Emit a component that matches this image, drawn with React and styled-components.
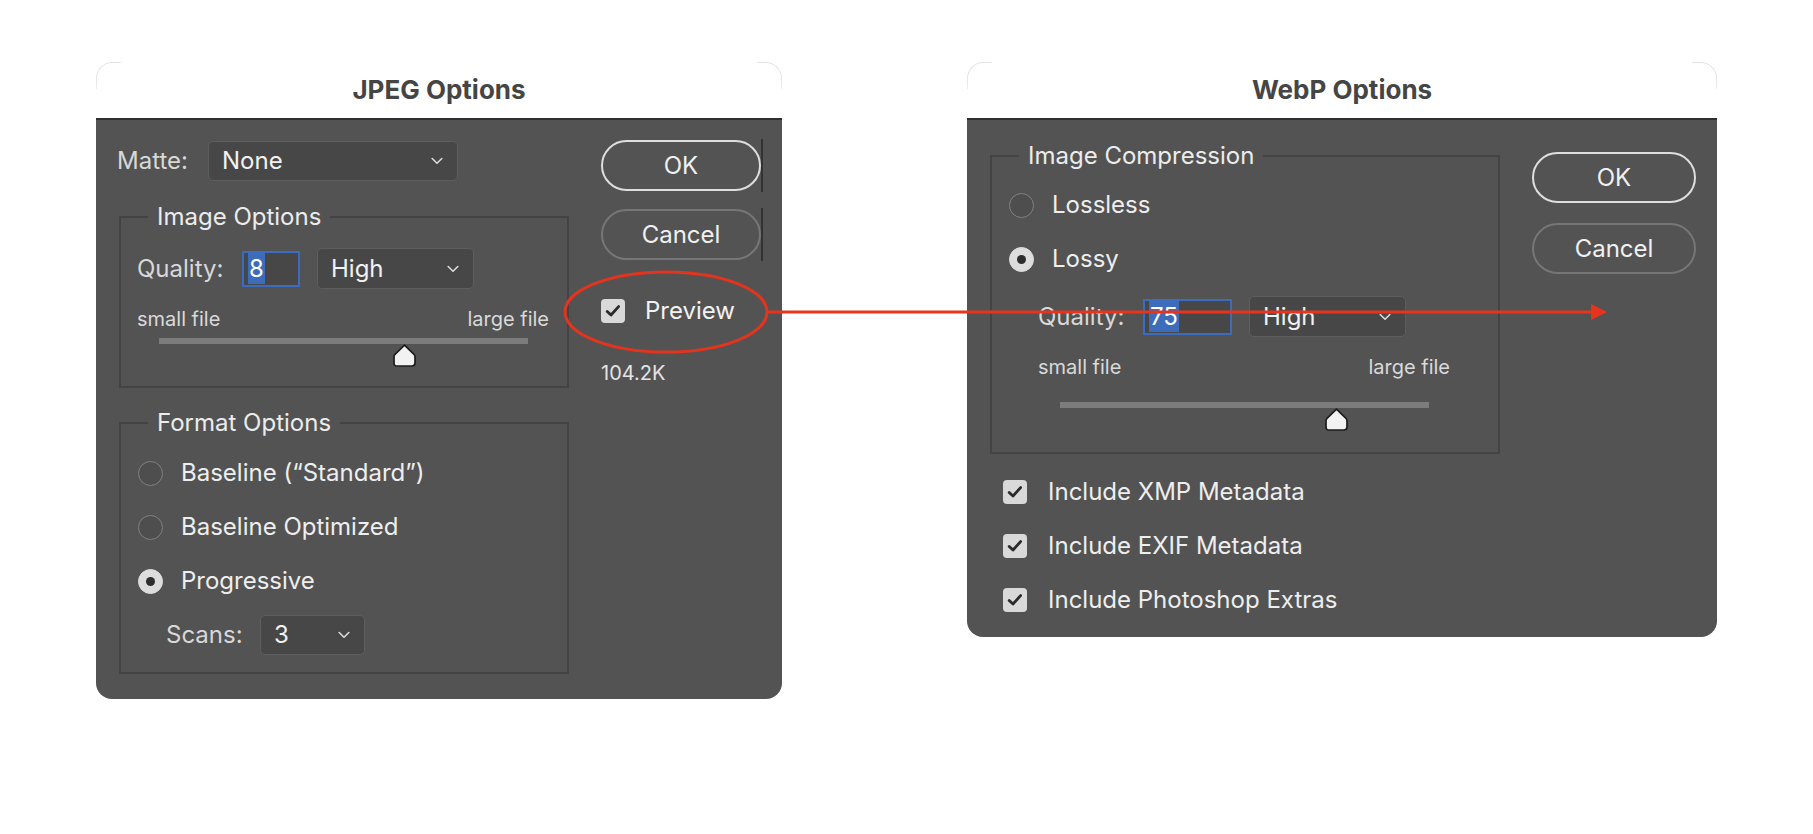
import React from 'react';
import styled, { createGlobalStyle } from 'styled-components';

const GlobalStyle = createGlobalStyle`
  html, body { margin: 0; padding: 0; background: #ffffff; }
  body {
    font-family: Inter, "Noto Sans", "Liberation Sans", sans-serif;
    -webkit-font-smoothing: antialiased;
  }
  #root { width: 1813px; height: 834px; }
`;

const Page = styled.main`
  position: relative;
  width: 1813px;
  height: 834px;
  box-sizing: border-box;
  padding: 62px 0 0 96px;
  display: flex;
  align-items: flex-start;
  gap: 185px;
  overflow: hidden;
  background: #fff;
`;

const Dialog = styled.section`
  width: ${(p) => p.$width}px;
  display: flex;
  flex-direction: column;
`;

const TitleBar = styled.header`
  position: relative;
  height: 56px;
  box-sizing: border-box;
  padding-bottom: 2px;
  display: flex;
  align-items: center;
  justify-content: center;
  font-size: 26px;
  font-weight: 700;
  color: #454545;
  background: #fff;
  &::before,
  &::after {
    content: '';
    position: absolute;
    top: 0;
    width: 24px;
    height: 26px;
    border-top: 1px solid #e0e0e0;
  }
  &::before {
    left: 0;
    border-left: 1px solid #e0e0e0;
    border-top-left-radius: 16px;
    -webkit-mask-image: radial-gradient(circle at 100% 100%, transparent 55%, #000 75%);
  }
  &::after {
    right: 0;
    border-right: 1px solid #e0e0e0;
    border-top-right-radius: 16px;
    -webkit-mask-image: radial-gradient(circle at 0% 100%, transparent 55%, #000 75%);
  }
`;

const Body = styled.div`
  background: #535353;
  border-top: 2px solid #2f2f2f;
  border-radius: 0 0 16px 16px;
  display: flex;
  align-items: flex-start;
  gap: 32px;
  padding: ${(p) => p.$pad};
  color: #eeeeee;
  font-size: 24px;
  line-height: 28px;
`;

const Column = styled.div`
  display: flex;
  flex-direction: column;
  align-items: flex-start;
  width: ${(p) => p.$w}px;
  margin-top: ${(p) => p.$top || 0}px;
`;

const FieldRow = styled.div`
  display: flex;
  align-items: center;
  height: ${(p) => p.$h || 40}px;
  margin-left: ${(p) => p.$ml || 0}px;
  margin-top: ${(p) => p.$mt || 0}px;
`;

const Label = styled.span`
  width: ${(p) => p.$w}px;
  flex: none;
  color: #d8d8d8;
  white-space: nowrap;
`;

const SelectBox = styled.div`
  width: ${(p) => p.$w}px;
  height: ${(p) => p.$h || 40}px;
  box-sizing: border-box;
  flex: none;
  display: flex;
  align-items: center;
  justify-content: space-between;
  padding: 0 14px 0 13px;
  background: #474747;
  border: 1.5px solid #5e5e5e;
  border-radius: 5px;
  color: #f2f2f2;
`;

const Chevron = () => (
  <svg width="12" height="8" viewBox="0 0 12 8" fill="none">
    <path d="M1.2 1.5 L6 6.2 L10.8 1.5" stroke="#dcdcdc" strokeWidth="1.6" strokeLinecap="round" strokeLinejoin="round" />
  </svg>
);

const Select = ({ w, h, value }) => (
  <SelectBox $w={w} $h={h}>
    <span>{value}</span>
    <Chevron />
  </SelectBox>
);

const Group = styled.fieldset`
  width: ${(p) => p.$w}px;
  box-sizing: border-box;
  margin: ${(p) => p.$mt || 0}px 0 0 ${(p) => p.$ml || 0}px;
  padding: 0;
  min-width: 0;
  border: 2px solid #434343;
`;

const Legend = styled.legend`
  margin-left: 27px;
  padding: 0 9px;
  font-size: 24px;
  line-height: 28px;
  color: #ececec;
`;

const GroupContent = styled.div`
  display: flex;
  flex-direction: column;
  gap: ${(p) => p.$gap || 0}px;
  padding: ${(p) => p.$pad};
`;

const QualityWrap = styled.div`
  width: 412px;
  margin-left: ${(p) => p.$ml || 0}px;
  margin-top: ${(p) => p.$mt || 0}px;
  display: flex;
  flex-direction: column;
`;

const NumberInput = styled.div`
  width: ${(p) => p.$w}px;
  height: 36px;
  box-sizing: border-box;
  flex: none;
  display: flex;
  align-items: center;
  padding-left: 4px;
  margin-right: 17px;
  background: #474747;
  border: 2px solid #3a6cc2;
  color: #fff;
`;

const Selected = styled.span`
  background: #3d6cba;
  line-height: 31px;
  height: 31px;
  padding: 0 1px;
`;

const FileLabels = styled.div`
  display: flex;
  justify-content: space-between;
  margin-top: 18px;
  font-size: 20px;
  line-height: 24px;
  color: #dadada;
`;

const Slider = styled.div`
  position: relative;
  height: 29px;
  margin: ${(p) => p.$mt}px 21px 0 22px;
`;

const Track = styled.div`
  height: 6px;
  background: #7c7c7c;
`;

const ThumbSpot = styled.div`
  position: absolute;
  top: 6px;
  width: 23px;
  height: 23px;
  margin-left: -11.5px;
  display: flex;
`;

const Thumb = ({ pct }) => (
  <ThumbSpot style={{ left: `${pct}%` }}>
    <svg width="23" height="23" viewBox="0 0 23 23">
      <path
        d="M11.5 1.2 L21 10.3 Q22 11.3 22 12.8 L22 19 Q22 22 19 22 L4 22 Q1 22 1 19 L1 12.8 Q1 11.3 2 10.3 Z"
        fill="#f2f2f2"
        stroke="#1c1c1c"
        strokeWidth="1.7"
        strokeLinejoin="round"
      />
    </svg>
  </ThumbSpot>
);

const Quality = ({ value, inputW, pct, sliderTop, ml, mt }) => (
  <QualityWrap $ml={ml} $mt={mt}>
    <FieldRow $h={41}>
      <Label $w={105}>Quality:</Label>
      <NumberInput $w={inputW}>
        <Selected>{value}</Selected>
      </NumberInput>
      <Select w={157} h={41} value="High" />
    </FieldRow>
    <FileLabels>
      <span>small file</span>
      <span>large file</span>
    </FileLabels>
    <Slider $mt={sliderTop}>
      <Track />
      <Thumb pct={pct} />
    </Slider>
  </QualityWrap>
);

const OptionRow = styled.div`
  display: flex;
  align-items: center;
  height: 40px;
  gap: ${(p) => p.$gap}px;
  margin-left: ${(p) => p.$ml || 0}px;
  margin-top: ${(p) => p.$mt || 0}px;
  color: #eeeeee;
  white-space: nowrap;
`;

const RadioDot = styled.span`
  width: 25px;
  height: 25px;
  box-sizing: border-box;
  border-radius: 50%;
  flex: none;
  display: flex;
  align-items: center;
  justify-content: center;
  background: ${(p) => (p.$on ? '#dddddd' : '#4e4e4e')};
  border: 1.5px solid ${(p) => (p.$on ? '#dddddd' : '#818181')};
  &::after {
    content: '';
    width: 9px;
    height: 9px;
    border-radius: 50%;
    background: ${(p) => (p.$on ? '#2e2e2e' : 'transparent')};
  }
`;

const Radio = ({ on, mt, children }) => (
  <OptionRow $gap={18} $mt={mt}>
    <RadioDot $on={on} />
    <span>{children}</span>
  </OptionRow>
);

const CheckBoxSq = styled.span`
  width: 24px;
  height: 24px;
  flex: none;
  border-radius: 4px;
  background: #d9d9d9;
  display: flex;
  align-items: center;
  justify-content: center;
`;

const CheckMark = () => (
  <svg width="16" height="14" viewBox="0 0 16 14" fill="none">
    <path d="M2.2 7.4 L6 11 L13.6 2.6" stroke="#2a2a2a" strokeWidth="2.8" strokeLinecap="round" strokeLinejoin="round" />
  </svg>
);

const Check = ({ gap = 21, ml = 0, children }) => (
  <OptionRow $gap={gap} $ml={ml}>
    <CheckBoxSq>
      <CheckMark />
    </CheckBoxSq>
    <span>{children}</span>
  </OptionRow>
);

const CheckList = styled.div`
  display: flex;
  flex-direction: column;
  gap: 14px;
  margin-top: 18px;
`;

const ButtonSlot = styled.div`
  display: flex;
  margin-top: ${(p) => p.$mt || 0}px;
  border-right: ${(p) => (p.$edge ? '2px solid #333333' : 'none')};
  padding: ${(p) => (p.$edge ? '1px 0' : '0')};
`;

const Pill = styled.button`
  width: ${(p) => p.$w}px;
  height: 51px;
  box-sizing: border-box;
  border-radius: 26px;
  border: 2px solid ${(p) => (p.$primary ? '#dedede' : '#767676')};
  background: transparent;
  color: #f0f0f0;
  font-family: inherit;
  font-size: 24px;
  padding: 0;
`;

const SizeInfo = styled.div`
  margin-top: 38px;
  font-size: 20px;
  line-height: 24px;
  color: #e4e4e4;
`;

const PreviewRow = styled.div`
  display: flex;
  align-items: center;
  gap: 20px;
  height: 24px;
  margin-top: 38px;
  color: #f2f2f2;
`;

const Overlay = styled.svg`
  position: absolute;
  left: 0;
  top: 0;
  width: 1813px;
  height: 834px;
  pointer-events: none;
`;

const Annotation = () => (
  <Overlay viewBox="0 0 1813 834">
    <ellipse cx="666" cy="312" rx="101" ry="40" fill="none" stroke="#e2341e" strokeWidth="3" />
    <line x1="767" y1="312" x2="1593" y2="312" stroke="#e8341c" strokeWidth="3" />
    <path d="M1591 304 L1607 312 L1591 320 Z" fill="#e8341c" />
  </Overlay>
);

export default function App() {
  return (
    <>
      <GlobalStyle />
      <Page>
        <Dialog $width={686}>
          <TitleBar>JPEG Options</TitleBar>
          <Body $pad="19px 19px 25px 21px">
            <Column $w={452} $top={2}>
              <FieldRow>
                <Label $w={91}>Matte:</Label>
                <Select w={250} value="None" />
              </FieldRow>
              <Group $w={450} $ml={2} $mt={22}>
                <Legend>Image Options</Legend>
                <GroupContent $pad="17px 18px 19px 16px">
                  <Quality value="8" inputW={58} pct={66.5} sliderTop={7} />
                </GroupContent>
              </Group>
              <Group $w={450} $ml={2} $mt={21}>
                <Legend>Format Options</Legend>
                <GroupContent $pad="16px 18px 17px 17px" $gap={14}>
                  <Radio>Baseline (“Standard”)</Radio>
                  <Radio>Baseline Optimized</Radio>
                  <Radio on>Progressive</Radio>
                  <FieldRow $ml={28}>
                    <Label $w={94}>Scans:</Label>
                    <Select w={105} value="3" />
                  </FieldRow>
                </GroupContent>
              </Group>
            </Column>
            <Column $w={162}>
              <ButtonSlot $edge>
                <Pill $w={160} $primary>OK</Pill>
              </ButtonSlot>
              <ButtonSlot $edge $mt={16}>
                <Pill $w={160}>Cancel</Pill>
              </ButtonSlot>
              <PreviewRow>
                <CheckBoxSq>
                  <CheckMark />
                </CheckBoxSq>
                <span>Preview</span>
              </PreviewRow>
              <SizeInfo>104.2K</SizeInfo>
            </Column>
          </Body>
        </Dialog>

        <Dialog $width={750}>
          <TitleBar>WebP Options</TitleBar>
          <Body $pad="22px 21px 17px 23px">
            <Column $w={510}>
              <Group $w={510}>
                <Legend>Image Compression</Legend>
                <GroupContent $pad="15px 18px 21px 17px">
                  <Radio>Lossless</Radio>
                  <Radio on mt={14}>Lossy</Radio>
                  <Quality value="75" inputW={89} pct={75} sliderTop={23} ml={29} mt={17} />
                </GroupContent>
              </Group>
              <CheckList>
                <Check ml={13}>Include XMP Metadata</Check>
                <Check ml={13}>Include EXIF Metadata</Check>
                <Check ml={13}>Include Photoshop Extras</Check>
              </CheckList>
            </Column>
            <Column $w={164} $top={10}>
              <ButtonSlot>
                <Pill $w={164} $primary>OK</Pill>
              </ButtonSlot>
              <ButtonSlot $mt={20}>
                <Pill $w={164}>Cancel</Pill>
              </ButtonSlot>
            </Column>
          </Body>
        </Dialog>
        <Annotation />
      </Page>
    </>
  );
}
